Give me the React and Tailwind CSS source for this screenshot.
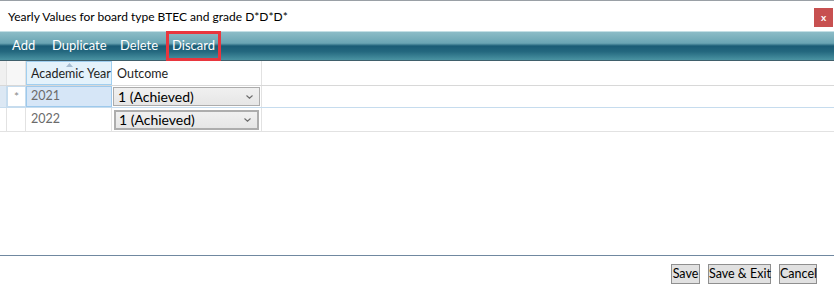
export default function App() {
  const font = "font-['Lato','Noto_Sans',sans-serif]";
  const Chevron = () => (
    <svg width="7" height="4" viewBox="0 0 7 4" className="shrink-0">
      <path d="M0.5 0.5 L3.5 3.2 L6.5 0.5" fill="none" stroke="#6b6b6b" strokeWidth="1.1" />
    </svg>
  );
  return (
    <div className={`w-[834px] h-[292px] bg-white flex flex-col overflow-hidden ${font} text-[#1e1e1e]`}>
      <div className="h-px bg-[#9aa0a6]" />
      {/* title bar */}
      <div className="h-[30px] flex items-start justify-between pl-[8px] pr-px">
        <div className="pt-[8px] text-[12px] leading-[16px] text-black whitespace-nowrap">Yearly Values for board type BTEC and grade D*D*D*</div>
        <div className="mt-[7px] w-[19px] h-[19px] bg-[#c75050] flex items-center justify-center text-white text-[10px] font-bold leading-none pb-[2px]">x</div>
      </div>
      {/* toolbar */}
      <div className="h-[30px] border-t border-[#c4dfe5] border-b border-b-[#3f5f6b] bg-[linear-gradient(to_bottom,#8cbcc7_0%,#6aa5b3_40%,#1a5c75_50%,#24687f_70%,#4a93a2_100%)] flex items-stretch pl-[12px] text-white text-[13px] whitespace-nowrap">
        <div className="flex items-center w-[40px]">Add</div>
        <div className="flex items-center w-[68px]">Duplicate</div>
        <div className="flex items-center w-[46px]">Delete</div>
        <div className="flex items-center border-[3px] border-[#e8363e] px-[3px] w-[55px] -mt-px -mb-px">Discard</div>
      </div>
      {/* grid header */}
      <div className="h-[25px] flex border-b border-[#d8d8d8] text-[12.5px] whitespace-nowrap">
        <div className="w-[7px] bg-[#f0f0f0] border-r border-[#e2e2e2]" />
        <div className="w-[19px] bg-[#f7f7f7] border-r border-[#e2e2e2]" />
        <div className="relative w-[86px] bg-[#e4f2fb] border border-[#a0cff0] flex items-center pl-[4px] pt-[2px]">
          Academic Year
          <svg width="7" height="4" viewBox="0 0 7 4" className="absolute left-[39px] top-[1px]">
            <path d="M0 4 L3.5 0 L7 4 Z" fill="#a7bdd2" />
          </svg>
        </div>
        <div className="w-[150px] bg-white border-r border-[#e2e2e2] flex items-center pl-[5px] pt-[2px]">Outcome</div>
        <div className="flex-1 bg-white" />
      </div>
      {/* row 1 */}
      <div className="h-[22px] flex border-b border-[#c6dcee] text-[12.5px] whitespace-nowrap">
        <div className="w-[7px] bg-[#dce8f4] border-r border-[#c6dcee]" />
        <div className="w-[19px] bg-white border border-[#c6dcee] flex items-center justify-center text-[#8a8a8a] text-[12px]">*</div>
        <div className="w-[86px] bg-[#d6e6f7] border border-[#9dc9ec] flex items-center pl-[4px] text-[#6b6b6b]">2021</div>
        <div className="w-[150px] border-r border-[#e2e2e2] p-px">
          <div className="h-full border border-[#acacac] bg-[linear-gradient(to_bottom,#f0f0f0,#e6e6e6)] flex items-center justify-between pl-[4px] pr-[6px] text-black text-[14px] leading-none">
            <span>1 (Achieved)</span>
            <Chevron />
          </div>
        </div>
        <div className="flex-1 bg-white" />
      </div>
      {/* row 2 */}
      <div className="h-[24px] flex border-b border-[#e2e2e2] text-[12.5px] whitespace-nowrap">
        <div className="w-[7px] bg-white border-r border-[#e2e2e2]" />
        <div className="w-[19px] bg-white border-r border-[#e2e2e2]" />
        <div className="w-[86px] bg-white border-r border-[#e2e2e2] flex items-center pl-[5px] text-[#6b6b6b]">2022</div>
        <div className="w-[150px] border-r border-[#e2e2e2] px-[2px] pt-[2px] pb-px">
          <div className="h-full border-2 border-[#adadad] bg-[linear-gradient(to_bottom,#f0f0f0,#e6e6e6)] flex items-center justify-between pl-[3px] pr-[6px] text-black text-[14px] leading-none">
            <span>1 (Achieved)</span>
            <Chevron />
          </div>
        </div>
        <div className="flex-1 bg-white" />
      </div>
      <div className="flex-1" />
      {/* footer */}
      <div className="h-px bg-[#7088a0]" />
      <div className="h-[36px] flex items-start justify-end gap-[8px] pr-[17px] pt-[8px] text-[12.5px] whitespace-nowrap">
        <button className="h-[20px] w-[29px] bg-[#e1e1e1] border border-[#8f8f8f] leading-none text-black">Save</button>
        <button className="h-[20px] w-[63px] bg-[#e1e1e1] border border-[#8f8f8f] leading-none text-black">Save &amp; Exit</button>
        <button className="h-[20px] w-[38px] bg-[#e1e1e1] border border-[#8f8f8f] leading-none text-black">Cancel</button>
      </div>
    </div>
  );
}
